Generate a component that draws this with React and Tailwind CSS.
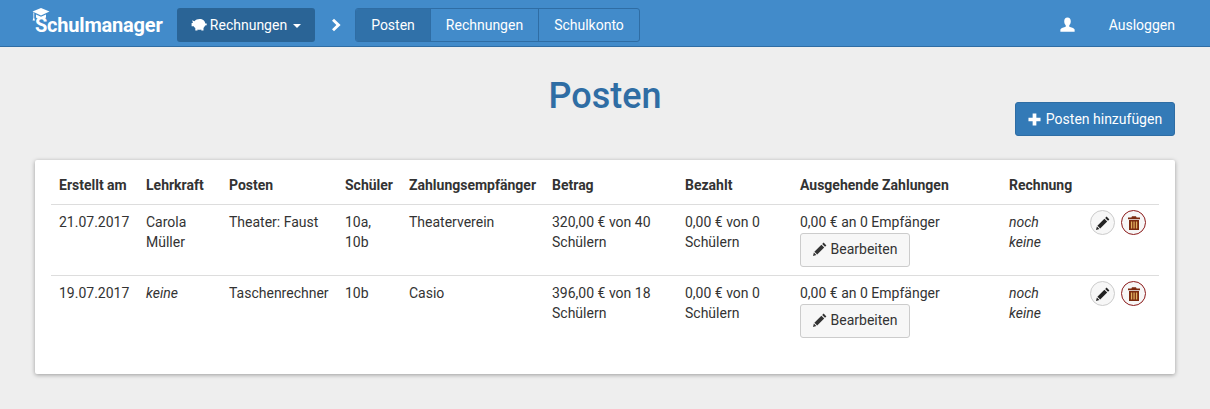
const rows = [
  {
    date: '21.07.2017',
    teacher: 'Carola Müller',
    item: 'Theater: Faust',
    students: '10a, 10b',
    payee: 'Theaterverein',
    amount: '320,00 € von 40 Schülern',
  },
  {
    date: '19.07.2017',
    teacher: 'keine',
    noTeacher: true,
    item: 'Taschenrechner',
    students: '10b',
    payee: 'Casio',
    amount: '396,00 € von 18 Schülern',
  },
];

const heads = [
  ['Erstellt am', 'w-[87px]'],
  ['Lehrkraft', 'w-[83px]'],
  ['Posten', 'w-[116px]'],
  ['Schüler', 'w-[64px]'],
  ['Zahlungsempfänger', 'w-[143px]'],
  ['Betrag', 'w-[133px]'],
  ['Bezahlt', 'w-[115px]'],
  ['Ausgehende Zahlungen', 'w-[209px]'],
  ['Rechnung', 'w-[81px]'],
  ['', 'w-[77px]'],
];

function Pencil({ className }) {
  return (
    <svg viewBox="0 0 14 14" className={className} fill="currentColor">
      <path d="M10.6 0.6 13.4 3.4 12 4.8 9.2 2Z" />
      <path d="M8.4 2.8 11.2 5.6 4.2 12.6 1.4 9.8Z" />
      <path d="M0.9 10.6 3.4 13.1 0 14Z" />
    </svg>
  );
}

function Trash({ className }) {
  return (
    <svg viewBox="0 0 14 14" className={className} fill="currentColor">
      <rect x="2" y="4" width="10" height="10" fill="#e0b060" />
      <path d="M5 0.3H9L9.6 1.6H13V3.2H1V1.6H4.4Z" />
      <path fillRule="evenodd" d="M2 4H12V14H2ZM3.9 5.4V12.6H5.2V5.4ZM6.4 5.4V12.6H7.7V5.4ZM8.9 5.4V12.6H10.2V5.4Z" />
    </svg>
  );
}

function Piggy({ className }) {
  return (
    <svg viewBox="0 0 16 14" className={className} fill="currentColor">
      <path d="M3.4 3.3C4.6 1.6 6.6 0.9 8.6 0.9C11.8 0.9 14.1 2.9 14.3 5.6L15.7 5.4V7.2L14.1 7.6C13.8 8.6 13.2 9.4 12.5 10V12.6H10.3V11.4C9 11.7 7.7 11.7 6.5 11.4V12.6H4.3V10.1C3.6 9.6 3 9 2.7 8.3H0.6V4.9H1.9L1.2 2.3Z" />
    </svg>
  );
}

function Logo() {
  return (
    <div className="relative h-[34px] w-[162px]">
      <svg viewBox="0 0 18 18" className="absolute left-[32px] top-0 h-[18px] w-[18px] text-white" fill="currentColor">
        <path d="M9 0 17.5 3.6 9 7.4 0.5 3.6Z" />
        <path d="M4 6.6 9 8.8 14 6.6V9.4C12.6 10.6 10.8 11 9 11C7.2 11 5.4 10.6 4 9.4Z" />
        <path d="M1.4 4.4H2.2V9.8L3 12.4H0.6L1.4 9.8Z" />
      </svg>
      <span className="absolute left-[35px] top-[5px] text-[20px] leading-[24px] font-bold tracking-[-0.2px] text-white whitespace-nowrap">
        Schulmanager
      </span>
    </div>
  );
}

function EditButton() {
  return (
    <button className="flex h-[34px] w-[110px] items-center justify-center gap-[4px] rounded-[3px] border border-[#ccc] bg-[#f7f7f7] pb-[2px] text-[14px] text-[#333]">
      <Pencil className="h-[14px] w-[14px]" />
      Bearbeiten
    </button>
  );
}

export default function App() {
  return (
    <div className="min-h-[409px] bg-[#eeeeee] font-['Roboto',sans-serif] text-[14px] leading-[20px] text-[#333]">
      {/* Top navigation */}
      <nav className="flex h-[47px] items-center border-b border-[#2f6da4] bg-[#428bca] pt-[4px] text-white">
        <Logo />
        <button className="ml-[15px] flex h-[34px] w-[138px] items-center justify-center gap-[3px] rounded-[3px] bg-[#2a6496]">
          <Piggy className="h-[14px] w-[16px]" />
          Rechnungen
          <span className="ml-[3px] mt-[2px] border-x-[4px] border-t-[4px] border-x-transparent border-t-white" />
        </button>
        <svg viewBox="0 0 12 14" className="ml-[16px] h-[14px] w-[12px]" fill="currentColor">
          <path d="M3 0.8 9.6 7 3 13.2 1 11.2 5.4 7 1 2.8Z" />
        </svg>
        <div className="ml-[12px] flex h-[34px] overflow-hidden rounded-[3px] border border-[#2f6da4]">
          <a className="flex w-[74px] items-center justify-center bg-[#3071a9]">Posten</a>
          <a className="flex w-[108px] items-center justify-center border-l border-[#2f6da4]">Rechnungen</a>
          <a className="flex w-[101px] items-center justify-center border-l border-[#2f6da4]">Schulkonto</a>
        </div>
        <svg viewBox="0 0 16 16" className="ml-auto mb-[2px] h-[15px] w-[15px]" fill="currentColor">
          <path d="M8 0.4C10.3 0.4 11.5 2.1 11.5 4.4C11.5 6.3 10.8 7.8 9.9 8.8V10.3C11.8 11 15 11.7 15.6 13.2V15.6H0.4V13.2C1 11.7 4.2 11 6.1 10.3V8.8C5.2 7.8 4.5 6.3 4.5 4.4C4.5 2.1 5.7 0.4 8 0.4Z" />
        </svg>
        <a className="ml-[34px] mr-[35px]">Ausloggen</a>
      </nav>

      <main className="px-[35px]">
        {/* Title row */}
        <div className="relative h-[113px]">
          <h1 className="pt-[27px] text-center text-[36px] leading-[44px] font-medium text-[#2f6da4]">Posten</h1>
          <button className="absolute right-0 top-[55px] flex h-[34px] w-[160px] items-center justify-center gap-[5px] rounded-[3px] border border-[#2e6da4] bg-[#337ab7] text-white">
            <svg viewBox="0 0 14 14" className="h-[13px] w-[13px]" fill="currentColor">
              <path d="M5 0.5H9V5H13.5V9H9V13.5H5V9H0.5V5H5Z" />
            </svg>
            Posten hinzufügen
          </button>
        </div>

        {/* Card with table */}
        <div className="h-[214px] rounded-[2px] bg-white px-[16px] pt-[7px] shadow-[0_1px_4px_rgba(0,0,0,0.35)]">
          <table className="w-[1108px] table-fixed border-collapse">
            <thead>
              <tr className="border-b border-[#ddd] text-left">
                {heads.map(([label, width]) => (
                  <th key={label || 'actions'} className={`${width} px-[8px] pt-[8px] pb-[9px] font-bold text-[#333]`}>
                    {label}
                  </th>
                ))}
              </tr>
            </thead>
            <tbody>
              {rows.map((row, i) => (
                <tr key={row.date} className={`align-top ${i === 0 ? 'border-b border-[#ddd]' : ''}`}>
                  <td className="px-[8px] pt-[7px] pb-[8px]">{row.date}</td>
                  <td className={`px-[8px] pt-[7px] pb-[8px] ${row.noTeacher ? 'italic' : ''}`}>{row.teacher}</td>
                  <td className="px-[8px] pt-[7px] pb-[8px]">{row.item}</td>
                  <td className="px-[8px] pt-[7px] pb-[8px]">{row.students}</td>
                  <td className="px-[8px] pt-[7px] pb-[8px]">{row.payee}</td>
                  <td className="px-[8px] pt-[7px] pb-[8px]">{row.amount}</td>
                  <td className="px-[8px] pt-[7px] pb-[8px]">0,00 € von 0 Schülern</td>
                  <td className="px-[8px] pt-[7px] pb-[8px]">
                    <div>0,00 € an 0 Empfänger</div>
                    <div className="mt-[1px]">
                      <EditButton />
                    </div>
                  </td>
                  <td className="px-[8px] pt-[7px] pb-[8px] italic">noch keine</td>
                  <td className="py-[5px] pl-[8px] pr-0">
                    <div className="flex gap-[6px]">
                      <button className="flex h-[25px] w-[25px] items-center justify-center rounded-full border border-[#ccc] bg-[#f7f7f7] text-[#222]">
                        <Pencil className="h-[14px] w-[14px]" />
                      </button>
                      <button className="flex h-[25px] w-[25px] items-center justify-center rounded-full border border-[#8b1a1a] bg-[#f7f7f7] text-[#7a2a10]">
                        <Trash className="h-[14px] w-[14px]" />
                      </button>
                    </div>
                  </td>
                </tr>
              ))}
            </tbody>
          </table>
        </div>
      </main>
    </div>
  );
}
